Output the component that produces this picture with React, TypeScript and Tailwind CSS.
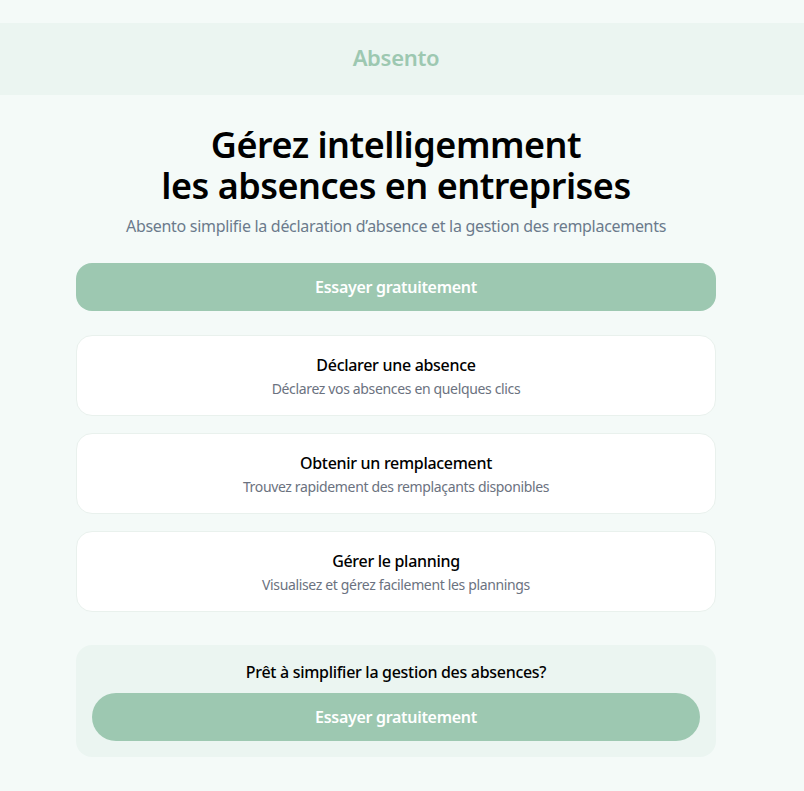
const features = [
  {
    title: "Déclarer une absence",
    description: "Déclarez vos absences en quelques clics",
  },
  {
    title: "Obtenir un remplacement",
    description: "Trouvez rapidement des remplaçants disponibles",
  },
  {
    title: "Gérer le planning",
    description: "Visualisez et gérez facilement les plannings",
  },
]

export default function App() {
  return (
    <div
      className="min-h-screen bg-[#f4faf8] pt-[23px] text-black"
      style={{ fontFamily: '"Noto Sans", "Open Sans", sans-serif' }}
    >
      <header className="bg-[#ebf5f1]">
        <div className="flex h-[72px] w-[792px] items-center justify-center pb-[4px]">
          <span className="text-[22px] font-semibold tracking-[-0.3px] text-[#9dc8b1]">Absento</span>
        </div>
      </header>

      <main className="w-[792px] pb-10">
        <div className="mx-auto w-[640px]">
          <section className="flex flex-col items-center pt-[29px] text-center">
            <h1 className="text-[36px] font-semibold leading-[41px] tracking-[-0.5px]">
              Gérez intelligemment
              <br />
              les absences en entreprises
            </h1>
            <p className="mt-[8px] text-[16px] tracking-[-0.3px] text-[#6b7a8c]">
              Absento simplifie la déclaration d’absence et la gestion des remplacements
            </p>
          </section>

          <button className="mt-[25px] h-12 w-full rounded-2xl bg-[#9dc8b1] text-[16px] font-semibold tracking-[-0.3px] text-white">
            Essayer gratuitement
          </button>

          <div className="mt-[24px] flex flex-col gap-[17px]">
            {features.map((f) => (
              <div
                key={f.title}
                className="flex h-[81px] flex-col items-center justify-center rounded-2xl border border-[#e9f1ed] bg-white"
              >
                <p className="text-[16px] font-medium leading-6 tracking-[-0.3px]">{f.title}</p>
                <p className="mt-[2px] text-[14px] leading-5 tracking-[-0.35px] text-[#6b7280]">
                  {f.description}
                </p>
              </div>
            ))}
          </div>

          <div className="mt-[33px] flex flex-col items-center rounded-2xl bg-[#ebf5f1] px-4 pb-4 pt-[15px]">
            <p className="text-[16px] font-medium leading-6 tracking-[-0.3px]">
              Prêt à simplifier la gestion des absences?
            </p>
            <button className="mt-[9px] h-12 w-full rounded-3xl bg-[#9dc8b1] text-[16px] font-semibold tracking-[-0.3px] text-white">
              Essayer gratuitement
            </button>
          </div>
        </div>
      </main>
    </div>
  )
}
